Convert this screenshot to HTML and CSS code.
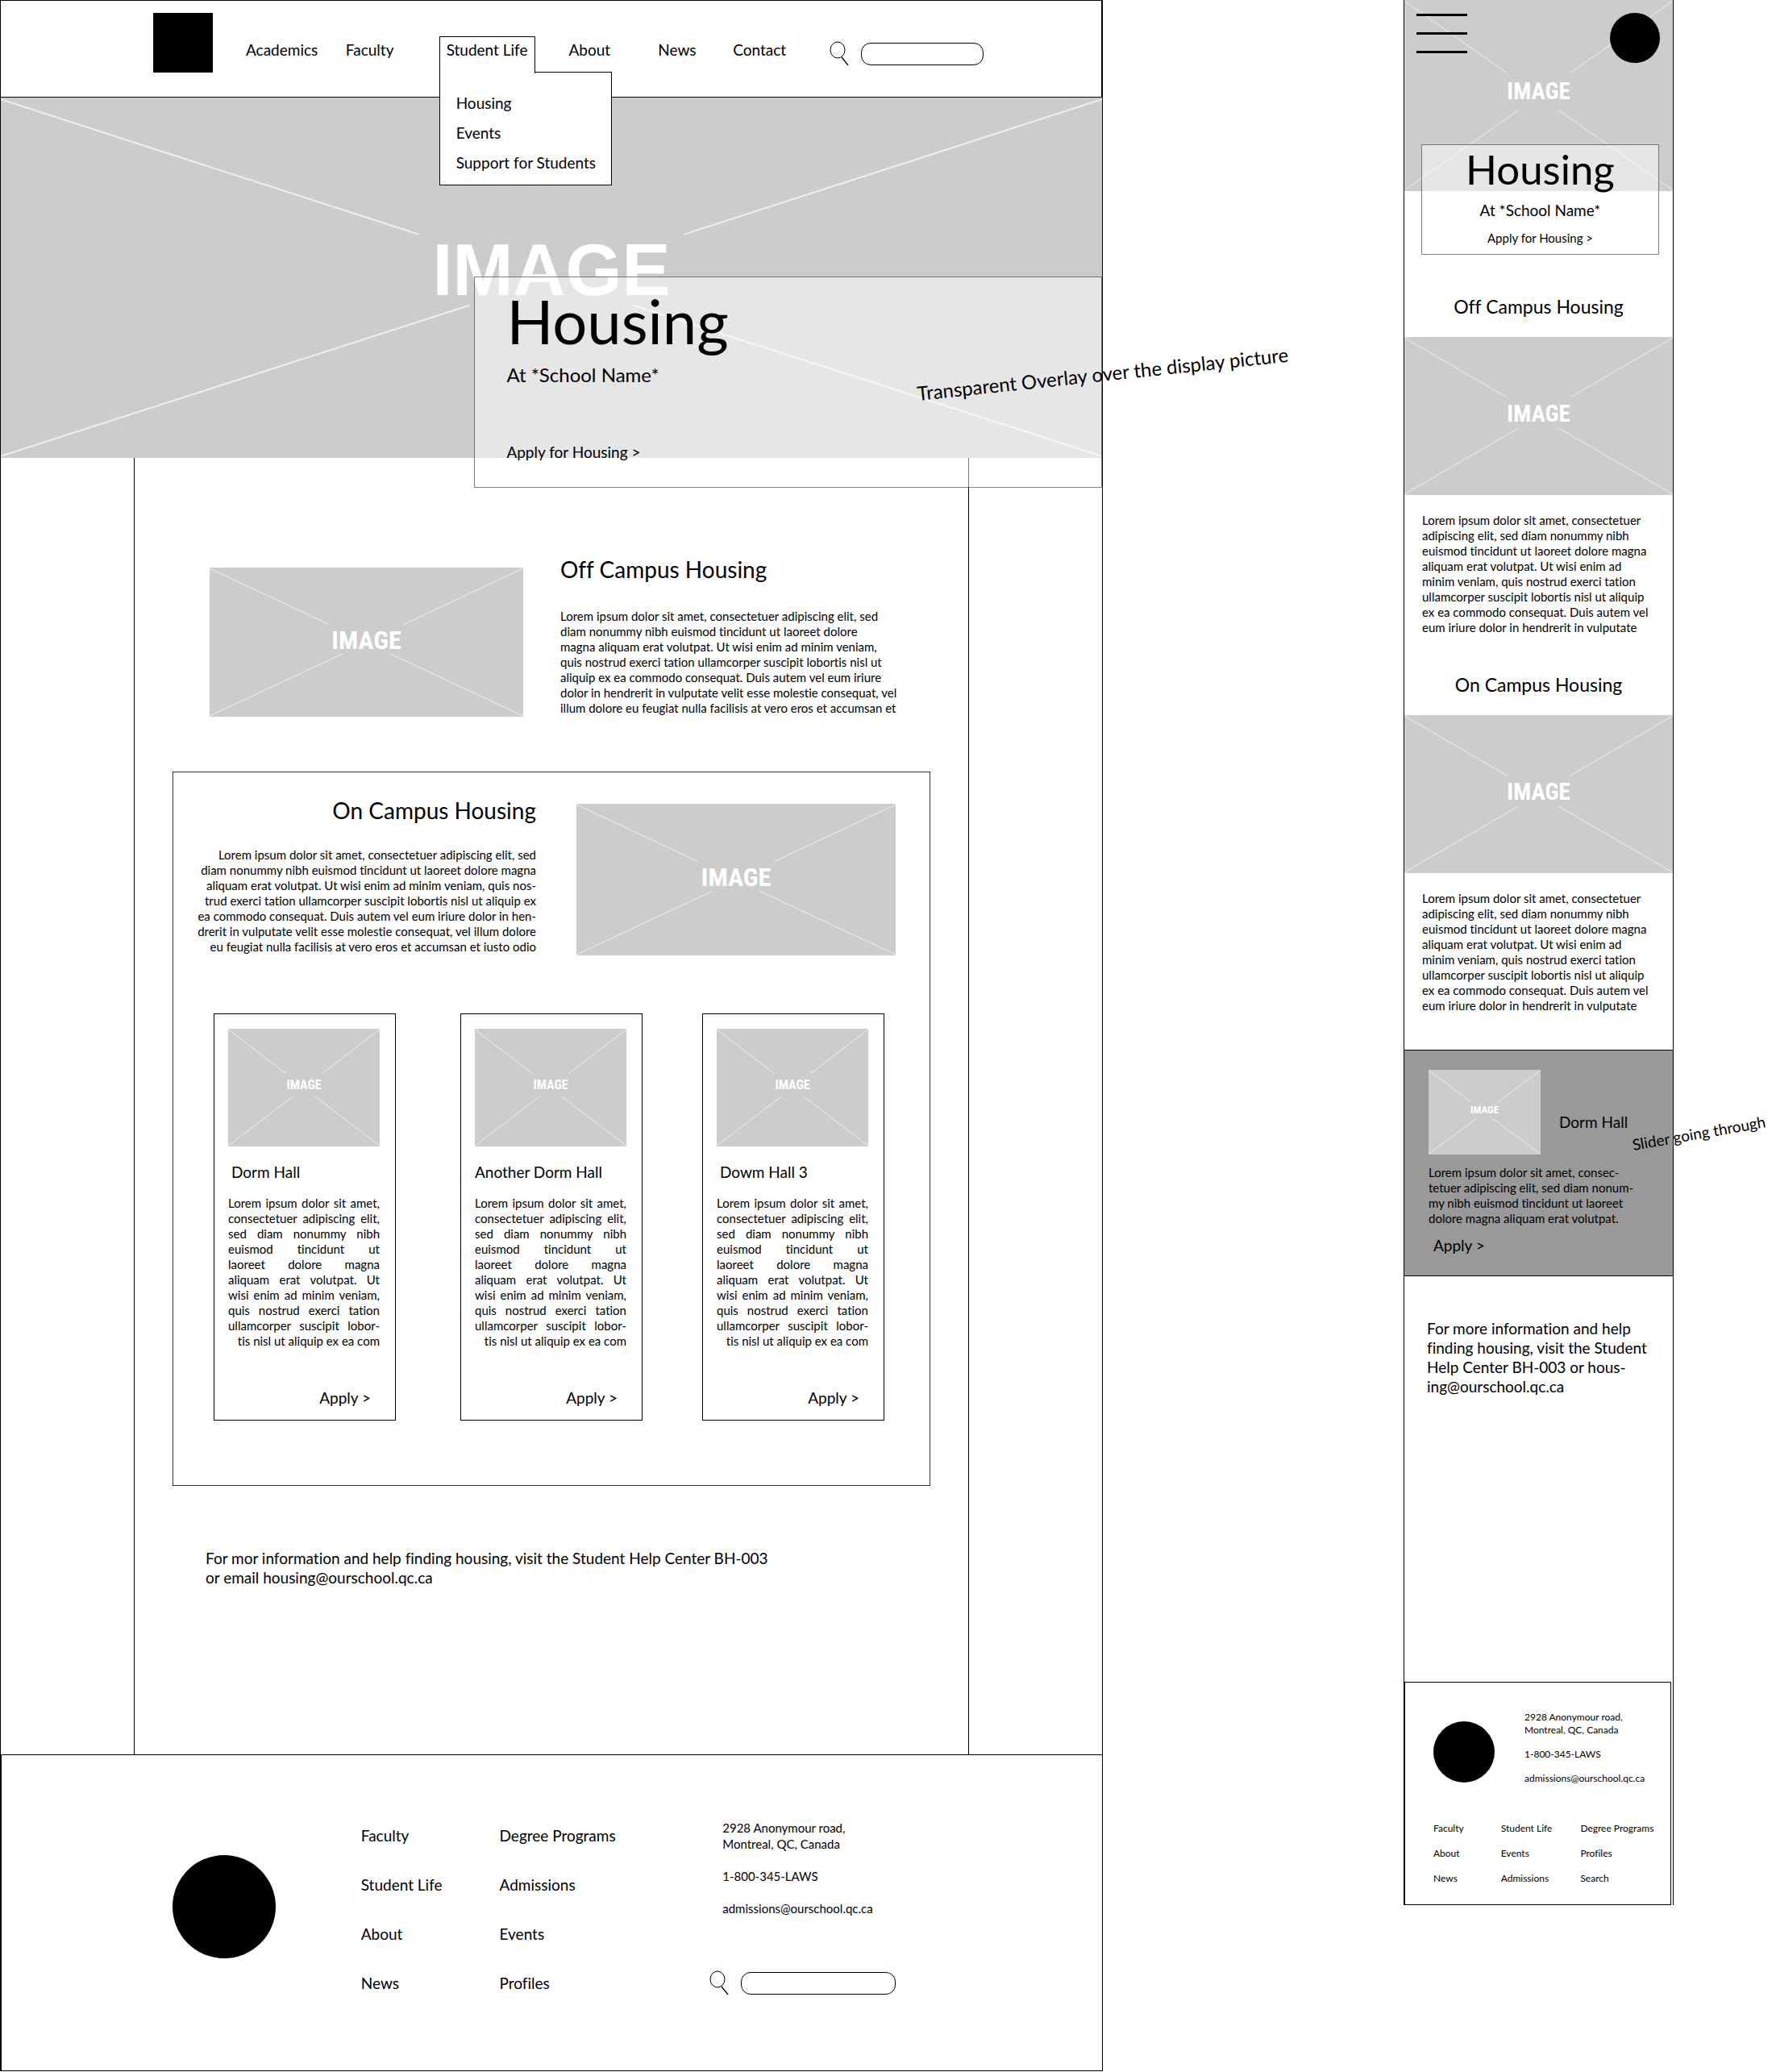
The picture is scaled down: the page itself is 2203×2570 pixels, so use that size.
FILE: index.html
```html
<!DOCTYPE html>
<html lang="en">
<head>
<meta charset="utf-8">
<title>Housing wireframes</title>
<link rel="stylesheet" href="styles.css">
</head>
<body>
<svg class="defs" aria-hidden="true">
  <symbol id="glass" viewBox="0 0 24 30">
    <ellipse cx="10" cy="11" rx="9" ry="10" fill="none" stroke="#000"/>
    <path d="M15 20 L23 30" fill="none" stroke="#000" stroke-width="1.3"/>
  </symbol>
  <symbol id="cross">
    <line x1="0" y1="0.5%" x2="38%" y2="38%"/>
    <line x1="100%" y1="0.5%" x2="62%" y2="38%"/>
    <line x1="0" y1="99.5%" x2="42.6%" y2="57.6%"/>
    <line x1="100%" y1="99.5%" x2="57.4%" y2="57.6%"/>
  </symbol>
</svg>

<div class="board">
  <div class="desktop">
    <header class="site-header">
      <div class="logo"></div>
      <nav class="site-nav" aria-label="Main">
        <a class="tab" href="#">Academics</a>
        <a class="tab" href="#">Faculty</a>
        <div class="has-menu">
          <a class="tab tab-open" href="#">Student Life</a>
          <div class="menu">
            <a href="#">Housing</a>
            <a href="#">Events</a>
            <a href="#">Support for Students</a>
          </div>
        </div>
        <a class="tab" href="#">About</a>
        <a class="tab" href="#">News</a>
        <a class="tab" href="#">Contact</a>
      </nav>
      <form class="search">
        <svg class="glass"><use href="#glass"/></svg>
        <input type="search" aria-label="Search the site">
      </form>
    </header>

    <section class="hero">
      <div class="picture picture-hero"><svg><use href="#cross"/></svg><span>IMAGE</span></div>
      <div class="hero-card">
        <h1>Housing</h1>
        <p class="lead">At *School Name*</p>
        <a class="hero-apply" href="#">Apply for Housing &gt;</a>
      </div>
      <p class="note note-overlay">Transparent Overlay over the display picture</p>
    </section>

    <main class="content">
      <section class="off-campus">
        <div class="picture picture-off"><svg><use href="#cross"/></svg><span>IMAGE</span></div>
        <div>
          <h2>Off Campus Housing</h2>
          <p class="copy">Lorem ipsum dolor sit amet, consectetuer adipiscing elit, sed<br>diam nonummy nibh euismod tincidunt ut laoreet dolore<br>magna aliquam erat volutpat. Ut wisi enim ad minim veniam,<br>quis nostrud exerci tation ullamcorper suscipit lobortis nisl ut<br>aliquip ex ea commodo consequat. Duis autem vel eum iriure<br>dolor in hendrerit in vulputate velit esse molestie consequat, vel<br>illum dolore eu feugiat nulla facilisis at vero eros et accumsan et</p>
        </div>
      </section>

      <section class="on-campus">
        <div class="on-intro">
          <div class="on-text">
            <h2>On Campus Housing</h2>
            <p class="copy">Lorem ipsum dolor sit amet, consectetuer adipiscing elit, sed<br>diam nonummy nibh euismod tincidunt ut laoreet dolore magna<br>aliquam erat volutpat. Ut wisi enim ad minim veniam, quis nos-<br>trud exerci tation ullamcorper suscipit lobortis nisl ut aliquip ex<br>ea commodo consequat. Duis autem vel eum iriure dolor in hen-<br>drerit in vulputate velit esse molestie consequat, vel illum dolore<br>eu feugiat nulla facilisis at vero eros et accumsan et iusto odio</p>
          </div>
          <div class="picture picture-on"><svg><use href="#cross"/></svg><span>IMAGE</span></div>
        </div>
        <div class="cards">
          <article class="card">
            <div class="picture picture-card"><svg><use href="#cross"/></svg><span>IMAGE</span></div>
            <h3>Dorm Hall</h3>
            <p class="copy justified">Lorem ipsum dolor sit amet,<br>consectetuer adipiscing elit,<br>sed diam nonummy nibh<br>euismod tincidunt ut<br>laoreet dolore magna<br>aliquam erat volutpat. Ut<br>wisi enim ad minim veniam,<br>quis nostrud exerci tation<br>ullamcorper suscipit lobor-<span class="last">tis nisl ut aliquip ex ea com</span></p>
            <a class="card-apply" href="#">Apply &gt;</a>
          </article>
          <article class="card">
            <div class="picture picture-card"><svg><use href="#cross"/></svg><span>IMAGE</span></div>
            <h3 class="flush">Another Dorm Hall</h3>
            <p class="copy justified">Lorem ipsum dolor sit amet,<br>consectetuer adipiscing elit,<br>sed diam nonummy nibh<br>euismod tincidunt ut<br>laoreet dolore magna<br>aliquam erat volutpat. Ut<br>wisi enim ad minim veniam,<br>quis nostrud exerci tation<br>ullamcorper suscipit lobor-<span class="last">tis nisl ut aliquip ex ea com</span></p>
            <a class="card-apply" href="#">Apply &gt;</a>
          </article>
          <article class="card">
            <div class="picture picture-card"><svg><use href="#cross"/></svg><span>IMAGE</span></div>
            <h3>Dowm Hall 3</h3>
            <p class="copy justified">Lorem ipsum dolor sit amet,<br>consectetuer adipiscing elit,<br>sed diam nonummy nibh<br>euismod tincidunt ut<br>laoreet dolore magna<br>aliquam erat volutpat. Ut<br>wisi enim ad minim veniam,<br>quis nostrud exerci tation<br>ullamcorper suscipit lobor-<span class="last">tis nisl ut aliquip ex ea com</span></p>
            <a class="card-apply" href="#">Apply &gt;</a>
          </article>
        </div>
      </section>

      <p class="info">For mor information and help finding housing, visit the Student Help Center BH-003<br>or email housing@ourschool.qc.ca</p>
    </main>

    <footer class="site-footer">
      <div class="seal"></div>
      <nav class="footer-links" aria-label="School">
        <a href="#">Faculty</a>
        <a href="#">Student Life</a>
        <a href="#">About</a>
        <a href="#">News</a>
      </nav>
      <nav class="footer-links" aria-label="Applicants">
        <a href="#">Degree Programs</a>
        <a href="#">Admissions</a>
        <a href="#">Events</a>
        <a href="#">Profiles</a>
      </nav>
      <div>
        <address class="contact">
          <p>2928 Anonymour road,<br>Montreal, QC, Canada</p>
          <p>1-800-345-LAWS</p>
          <p><a href="#">admissions@ourschool.qc.ca</a></p>
        </address>
        <form class="search search-footer">
          <svg class="glass"><use href="#glass"/></svg>
          <input type="search" aria-label="Search from the footer">
        </form>
      </div>
    </footer>
  </div>

  <div class="mobile">
    <section class="m-hero">
      <div class="picture picture-m-hero"><svg><use href="#cross"/></svg><span>IMAGE</span></div>
      <div class="m-bar">
        <button class="burger" type="button" aria-label="Menu"><i></i><i></i><i></i></button>
        <div class="m-logo"></div>
      </div>
      <div class="m-hero-card">
        <h1>Housing</h1>
        <p>At *School Name*</p>
        <a href="#">Apply for Housing &gt;</a>
      </div>
    </section>

    <section class="m-section">
      <h2>Off Campus Housing</h2>
      <div class="picture picture-m"><svg><use href="#cross"/></svg><span>IMAGE</span></div>
      <p class="copy">Lorem ipsum dolor sit amet, consectetuer<br>adipiscing elit, sed diam nonummy nibh<br>euismod tincidunt ut laoreet dolore magna<br>aliquam erat volutpat. Ut wisi enim ad<br>minim veniam, quis nostrud exerci tation<br>ullamcorper suscipit lobortis nisl ut aliquip<br>ex ea commodo consequat. Duis autem vel<br>eum iriure dolor in hendrerit in vulputate</p>
    </section>
    <section class="m-section">
      <h2>On Campus Housing</h2>
      <div class="picture picture-m"><svg><use href="#cross"/></svg><span>IMAGE</span></div>
      <p class="copy">Lorem ipsum dolor sit amet, consectetuer<br>adipiscing elit, sed diam nonummy nibh<br>euismod tincidunt ut laoreet dolore magna<br>aliquam erat volutpat. Ut wisi enim ad<br>minim veniam, quis nostrud exerci tation<br>ullamcorper suscipit lobortis nisl ut aliquip<br>ex ea commodo consequat. Duis autem vel<br>eum iriure dolor in hendrerit in vulputate</p>
    </section>

    <section class="slide">
      <div class="slide-top">
        <div class="picture picture-slide"><svg><use href="#cross"/></svg><span>IMAGE</span></div>
        <h3>Dorm Hall</h3>
      </div>
      <p class="copy">Lorem ipsum dolor sit amet, consec-<br>tetuer adipiscing elit, sed diam nonum-<br>my nibh euismod tincidunt ut laoreet<br>dolore magna aliquam erat volutpat.</p>
      <a class="slide-apply" href="#">Apply &gt;</a>
      <p class="note note-slider">Slider going through</p>
    </section>

    <p class="m-info">For more information and help<br>finding housing, visit the Student<br>Help Center BH-003 or hous-<br>ing@ourschool.qc.ca</p>

    <footer class="m-footer">
      <div class="m-contact">
        <div class="m-seal"></div>
        <address>
          <p>2928 Anonymour road,<br>Montreal, QC, Canada</p>
          <p>1-800-345-LAWS</p>
          <p><a href="#">admissions@ourschool.qc.ca</a></p>
        </address>
      </div>
      <nav class="m-links" aria-label="Footer">
        <a href="#">Faculty</a><a href="#">Student Life</a><a href="#">Degree Programs</a>
        <a href="#">About</a><a href="#">Events</a><a href="#">Profiles</a>
        <a href="#">News</a><a href="#">Admissions</a><a href="#">Search</a>
      </nav>
    </footer>
  </div>
</div>
</body>
</html>
```
FILE: styles.css
```css
:root {
  --text: 19px;
  --copy: 15px;
  --grey: #ccc;
}

* { box-sizing: border-box; }

body {
  margin: 0;
  background: #fff;
  color: #000;
  font-family: Lato, "Open Sans", sans-serif;
  font-size: var(--text);
  font-variant-ligatures: none;
  line-height: 24px;
}

h1, h2, h3, p { margin: 0; font-weight: 400; }
a { color: inherit; text-decoration: none; }
address { font-style: normal; }
.defs { position: absolute; width: 0; height: 0; }

/* Both frames side by side */
.board {
  display: grid;
  grid-template-columns: 1368fr 335fr;
  column-gap: 373px;
  align-items: start;
  padding-right: 127px;
}

/* Picture placeholders */
.picture {
  position: relative;
  display: grid;
  place-items: center;
  padding-bottom: 6px;
  background: var(--grey);
  color: #fff;
  font-family: "Roboto Condensed", Roboto, sans-serif;
  font-size: 32px;
  font-weight: 700;
  line-height: 1;
}
.picture svg {
  position: absolute;
  inset: 0;
  width: 100%;
  height: 100%;
  stroke: #eee;
  stroke-width: 1px;
}
.picture span { position: relative; }
.picture-hero { height: 447px; font-family: "Liberation Sans", sans-serif; font-size: 90px; padding-bottom: 20px; }
.picture-hero svg { stroke-width: 2px; }
.picture-off { height: 185px; margin-top: 16px; }
.picture-on { height: 188px; margin-top: 10px; }
.picture-card { height: 146px; font-size: 16px; }
.picture-m-hero { height: 237px; font-size: 29px; padding-bottom: 10px; }
.picture-m { height: 196px; font-size: 29px; }
.picture-slide { width: 139px; height: 105px; font-size: 13px; }

/* Desktop header */
.desktop { border: 1px solid #000; border-top: 0; border-bottom: 0; }
.site-header {
  display: flex;
  align-items: flex-start;
  padding: 15px 146px 29px 189px;
  border: solid #000;
  border-width: 1px 1px 1px 0;
}
.logo { width: 74px; height: 74px; margin-right: 41px; background: #000; }
.site-nav {
  flex: 1;
  display: grid;
  grid-template-columns: 124fr 116fr 161fr 111fr 93fr 120fr;
  margin-top: 29px;
}
.tab { display: block; padding: 5px 0 16px; }
.has-menu { position: relative; z-index: 3; }
.tab-open {
  position: relative;
  z-index: 1;
  width: 119px;
  padding: 4px 0 17px 8px;
  border: 1px solid #000;
  border-bottom: 0;
  background: #fff;
}
.menu {
  position: absolute;
  top: 44px;
  left: 0;
  display: grid;
  gap: 13px;
  width: 214px;
  padding: 26px 0 15px 20px;
  border: 1px solid #000;
  background: #fff;
}
.search { display: flex; gap: 15px; margin-top: 35px; }
.glass { width: 24px; height: 30px; }
.search input {
  width: 152px;
  height: 28px;
  margin: 2px 0 0;
  padding: 0 12px;
  border: 1px solid #000;
  border-radius: 12px;
  background: #fff;
}

/* Desktop hero */
.hero { position: relative; z-index: 2; }
.hero-card {
  position: absolute;
  top: 222px;
  left: 43%;
  right: 0;
  padding: 14px 0 31px 39px;
  border: 1px solid rgba(0, 0, 0, .5);
  background: rgba(255, 255, 255, .5);
}
.hero-card h1 { font-size: 76px; line-height: 80px; }
.lead { margin: 13px 0 70px; font-size: 24px; line-height: 28px; }
.hero-apply { display: block; }
.note { position: absolute; white-space: nowrap; transform-origin: 0 100%; }
.note-overlay { top: 353px; left: 1138px; font-size: 24px; line-height: 28px; transform: rotate(-6deg); }

/* Desktop content */
.content { margin: 0 165px; padding: 120px 0 207px; border: solid #000; border-width: 0 1px; }
h2 { font-size: 28px; line-height: 36px; }
.copy { font-size: var(--copy); line-height: 19px; white-space: nowrap; }
.off-campus {
  display: grid;
  grid-template-columns: 389fr 425fr;
  column-gap: 46px;
  padding: 0 81px 0 93px;
}
.off-campus .copy { margin-top: 31px; }
.on-campus { margin: 68px 47px 0; padding: 29px 0 80px; border: 1px solid #333; }
.on-intro {
  display: grid;
  grid-template-columns: 431fr 396fr;
  column-gap: 50px;
  padding: 0 42px 0 19px;
}
.on-text { display: flex; flex-direction: column; align-items: flex-end; text-align: right; }
.on-text .copy { margin-top: 28px; }
.cards {
  display: grid;
  grid-template-columns: 306fr 300fr 226fr;
  margin-top: 72px;
  padding: 0 56px 0 50px;
}
.card { width: 226px; padding: 18px 19px 15px 17px; border: 1px solid #000; }
.card h3 { margin: 20px 0 17px; padding-left: 4px; font-size: var(--text); }
.card h3.flush { padding-left: 0; }
.justified { text-align: justify; text-align-last: justify; }
.justified .last { display: block; text-align-last: right; }
.card-apply { display: block; margin-top: 49px; padding-right: 11px; text-align: right; }
.info { margin: 78px 0 0 88px; }

/* Desktop footer */
.site-footer {
  display: grid;
  grid-template-columns: 234fr 172fr 261fr 231fr;
  padding: 80px 256px 94px 212px;
  border: solid #000;
  border-width: 1px 0 1px 1px;
}
.seal { width: 128px; height: 128px; margin-top: 44px; border-radius: 50%; background: #000; }
.footer-links { display: grid; gap: 37px; align-content: start; margin-top: 8px; }
.contact { display: grid; gap: 20px; padding-left: 16px; font-size: var(--copy); line-height: 20px; }
.search-footer { margin-top: 67px; }
.search-footer input { flex: 1; min-width: 0; }

/* Mobile frame */
.mobile { border: 1px solid #000; border-top: 0; border-bottom: 0; }
.m-hero { position: relative; margin-bottom: 127px; }
.m-bar {
  position: absolute;
  top: 16px;
  left: 15px;
  right: 16px;
  display: flex;
  justify-content: space-between;
  align-items: flex-start;
}
.burger {
  display: grid;
  gap: 20px;
  width: 63px;
  padding: 1px 0;
  border: 0;
  background: none;
}
.burger i { height: 3px; background: #000; }
.m-logo { width: 62px; height: 62px; border-radius: 50%; background: #000; }
.m-hero-card {
  position: absolute;
  top: 179px;
  left: 21px;
  right: 17px;
  padding: 2px 0 8px;
  border: 1px solid rgba(0, 0, 0, .5);
  background: rgba(255, 255, 255, .5);
  text-align: center;
}
.m-hero-card h1 { font-size: 51px; line-height: 56px; }
.m-hero-card p { margin: 11px 0 10px; }
.m-hero-card a { display: block; font-size: var(--copy); }
.m-section { margin-bottom: 45px; }
.m-section h2 { margin-bottom: 22px; font-size: 23px; line-height: 32px; text-align: center; }
.m-section .copy { margin: 22px 0 0 22px; }
.slide {
  position: relative;
  padding: 24px 0 25px 30px;
  border: solid #000;
  border-width: 1px 0;
  background: #999;
}
.slide-top { display: flex; align-items: flex-end; gap: 23px; margin-bottom: 13px; }
.slide h3 { margin-bottom: 28px; font-size: var(--text); }
.slide-apply { display: block; margin: 12px 0 0 6px; }
.note-slider { top: 105px; left: 285px; transform: rotate(-10deg); }
.m-info { margin: 53px 0 354px 28px; white-space: nowrap; }
.m-footer {
  margin-right: 2px;
  padding: 35px 0 24px 35px;
  border: 1px solid #000;
  font-size: 12px;
  line-height: 16px;
}
.m-contact { display: flex; gap: 37px; margin-bottom: 46px; }
.m-contact address { display: grid; gap: 14px; }
.m-seal { width: 76px; height: 76px; margin-top: 13px; border-radius: 50%; background: #000; }
.m-links { display: grid; grid-template-columns: 84fr 99fr 112fr; row-gap: 15px; }
```
